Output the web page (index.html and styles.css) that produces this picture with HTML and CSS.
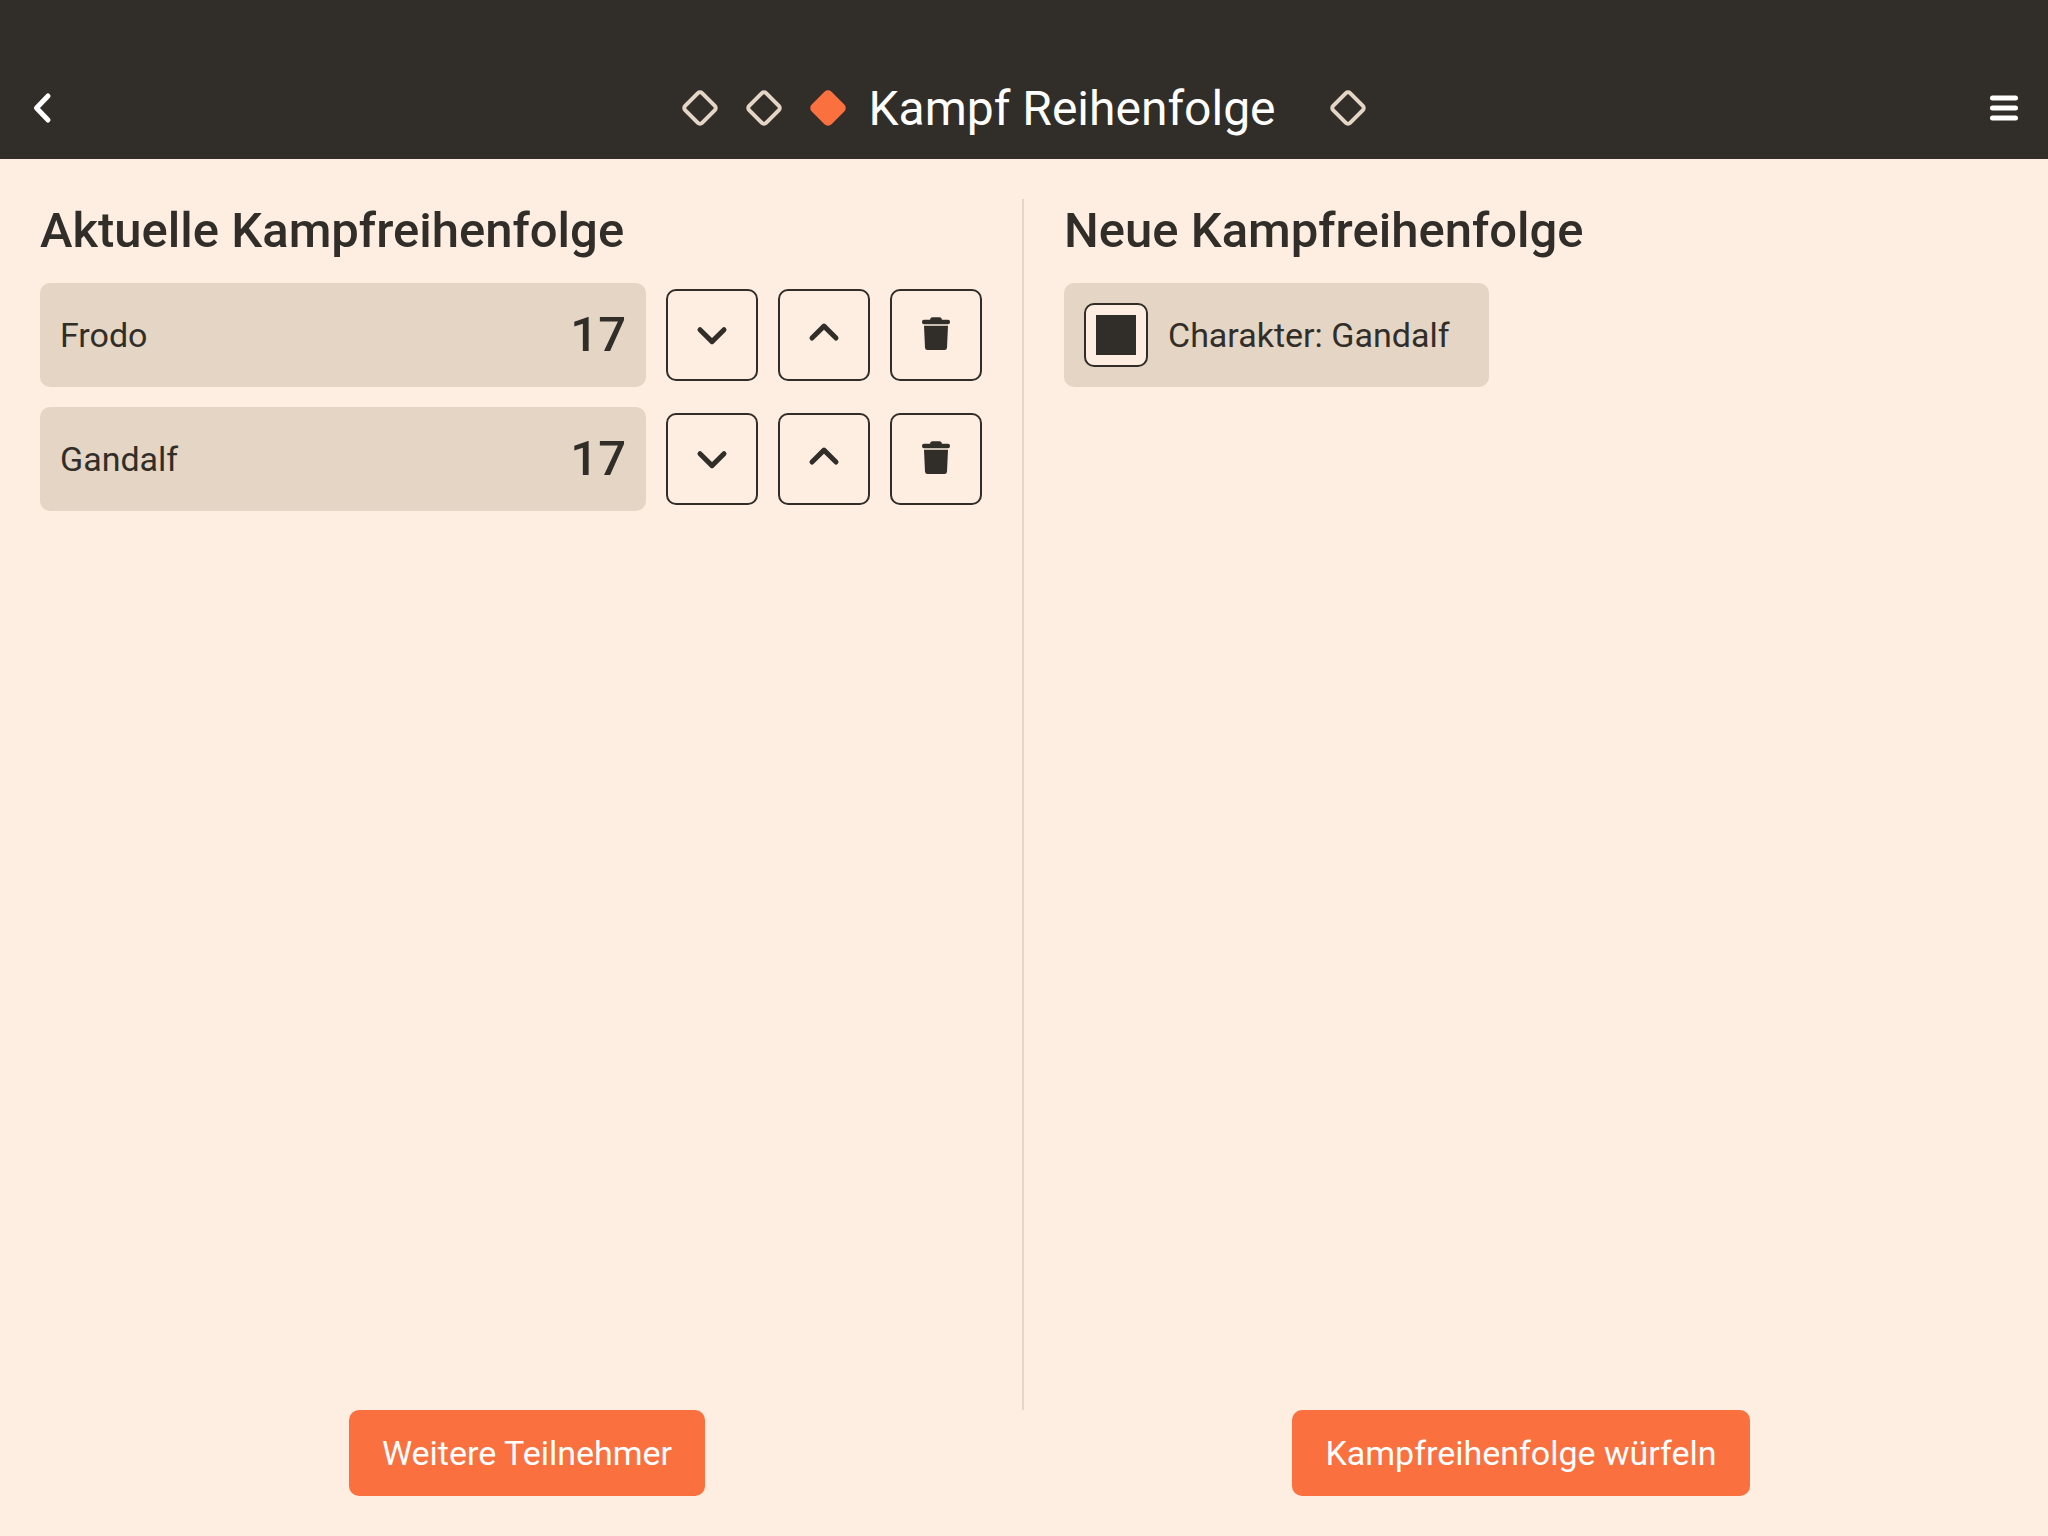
FILE: index.html
```html
<!DOCTYPE html>
<html lang="de">
<head>
<meta charset="utf-8">
<meta name="viewport" content="width=device-width, initial-scale=1">
<title>Kampf Reihenfolge</title>
<link rel="stylesheet" href="styles.css">
</head>
<body>
<svg class="sprite" aria-hidden="true">
  <symbol id="diamond" viewBox="0 0 40 40"><rect x="8" y="8" width="24" height="24" rx="3" transform="rotate(45 20 20)"/></symbol>
  <symbol id="down" viewBox="0 0 48 48"><path d="M12 18.7 24 30.6 36 18.7"/></symbol>
  <symbol id="up" viewBox="0 0 48 48"><path d="M12 27 24 15.1 36 27"/></symbol>
  <symbol id="trash" viewBox="0 0 48 48"><path d="M12 8.7h6c.6-1.6 1.200-2.400 2.500-2.400h7c1.300 0 1.900.8 2.500 2.400h6a2 2 0 0 1 2 2v.6a2 2 0 0 1-2 2H12a2 2 0 0 1-2-2v-.6a2 2 0 0 1 2-2zM12 14.700h24l-1 22a2.500 2.500 0 0 1-2.500 2.300h-17a2.500 2.500 0 0 1-2.500-2.300z"/></symbol>
</svg>
<header class="topbar">
  <button class="bar-button" type="button" aria-label="Zurück">
    <svg class="bar-icon" viewBox="0 0 48 48"><path d="M28 12 16.500 24 28 36"/></svg>
  </button>
  <nav class="steps" aria-label="Schritte">
    <a class="step" href="#" aria-label="Schritt 1"><svg class="diamond"><use href="#diamond"/></svg></a>
    <a class="step" href="#" aria-label="Schritt 2"><svg class="diamond"><use href="#diamond"/></svg></a>
    <a class="step step-active" href="#" aria-label="Schritt 3"><svg class="diamond"><use href="#diamond"/></svg></a>
    <h1 class="title">Kampf Reihenfolge</h1>
    <a class="step" href="#" aria-label="Schritt 4"><svg class="diamond"><use href="#diamond"/></svg></a>
  </nav>
  <button class="bar-button" type="button" aria-label="Menü">
    <svg class="bar-icon" viewBox="0 0 48 48"><path d="M12.500 14h23M12.500 24h23M12.500 34h23"/></svg>
  </button>
</header>
<main class="columns">
  <section class="column column-current">
    <h2 class="heading">Aktuelle Kampfreihenfolge</h2>
    <ul class="list">
      <li class="row">
        <div class="card entry"><span class="name">Frodo</span><span class="score">17</span></div>
        <button class="tool" type="button" aria-label="Frodo nach unten"><svg class="icon"><use href="#down"/></svg></button>
        <button class="tool" type="button" aria-label="Frodo nach oben"><svg class="icon"><use href="#up"/></svg></button>
        <button class="tool" type="button" aria-label="Frodo löschen"><svg class="icon icon-solid"><use href="#trash"/></svg></button>
      </li>
      <li class="row">
        <div class="card entry"><span class="name">Gandalf</span><span class="score">17</span></div>
        <button class="tool" type="button" aria-label="Gandalf nach unten"><svg class="icon"><use href="#down"/></svg></button>
        <button class="tool" type="button" aria-label="Gandalf nach oben"><svg class="icon"><use href="#up"/></svg></button>
        <button class="tool" type="button" aria-label="Gandalf löschen"><svg class="icon icon-solid"><use href="#trash"/></svg></button>
      </li>
    </ul>
  </section>
  <section class="column">
    <h2 class="heading">Neue Kampfreihenfolge</h2>
    <div class="card choice">
      <input class="check" type="checkbox" id="gandalf" checked>
      <label class="choice-label" for="gandalf">Charakter: Gandalf</label>
    </div>
  </section>
</main>
<footer class="actions">
  <button class="primary" type="button">Weitere Teilnehmer</button>
  <button class="primary" type="button">Kampfreihenfolge würfeln</button>
</footer>
</body>
</html>
```
FILE: styles.css
```css
:root {
  --ink: #312e29;
  --paper: #fdeee1;
  --sand: #e5d5c4;
  --accent: #fa703f;
}

* {
  box-sizing: border-box;
}

body {
  margin: 0;
  min-height: 100vh;
  display: flex;
  flex-direction: column;
  background: var(--paper);
  color: var(--ink);
  font-family: Roboto, "Liberation Sans", sans-serif;
  font-size: 34px;
  line-height: 48px;
}

button {
  font: inherit;
  cursor: pointer;
}

.sprite {
  position: absolute;
  width: 0;
  height: 0;
}

.topbar {
  display: flex;
  align-items: center;
  justify-content: space-between;
  padding: 57px 20px 0;
  min-height: 159px;
  background: var(--ink);
  color: #fff;
}

.bar-button {
  display: flex;
  padding: 0;
  border: 0;
  background: none;
  color: inherit;
}

.bar-icon {
  width: 48px;
  height: 48px;
  fill: none;
  stroke: currentColor;
  stroke-width: 5;
  stroke-linecap: round;
  stroke-linejoin: round;
}

.steps {
  display: flex;
  align-items: center;
}

.step {
  display: flex;
  justify-content: center;
  width: 64px;
  color: var(--sand);
}

.diamond {
  width: 40px;
  height: 40px;
  fill: none;
  stroke: currentColor;
  stroke-width: 4;
}

.step-active {
  color: var(--accent);
}

.step-active .diamond {
  fill: currentColor;
}

.title {
  margin: 0;
  padding: 2px 40px 0 8px;
  font-size: 48px;
  font-weight: 400;
  line-height: 64px;
}

.columns {
  flex: 1;
  display: grid;
  grid-template-columns: 1fr 1fr;
  padding-top: 40px;
}

.column {
  padding: 0 40px;
}

.column-current {
  border-right: 2px solid var(--sand);
}

.heading {
  margin: 0 0 20px;
  font-size: 49px;
  font-weight: 500;
  line-height: 64px;
}

.list {
  display: grid;
  gap: 20px;
  margin: 0;
  padding: 0;
  list-style: none;
}

.row {
  display: flex;
  align-items: center;
  gap: 20px;
}

.card {
  display: flex;
  align-items: center;
  min-height: 104px;
  padding: 20px;
  border-radius: 10px;
  background: var(--sand);
}

.entry {
  flex: 1;
  justify-content: space-between;
}

.score {
  font-size: 49px;
  font-weight: 500;
}

.tool {
  display: flex;
  align-items: center;
  justify-content: center;
  width: 92px;
  height: 92px;
  padding: 0;
  border: 2px solid var(--ink);
  border-radius: 10px;
  background: none;
  color: inherit;
}

.icon {
  width: 48px;
  height: 48px;
  fill: none;
  stroke: currentColor;
  stroke-width: 5;
  stroke-linecap: round;
  stroke-linejoin: round;
}

.icon-solid {
  fill: currentColor;
  stroke: none;
}

.choice {
  width: fit-content;
  gap: 20px;
}

.check {
  appearance: none;
  width: 64px;
  height: 64px;
  margin: 0;
  border: 2px solid var(--ink);
  border-radius: 10px;
  background-color: var(--paper);
}

.check:checked {
  background-image: linear-gradient(var(--ink), var(--ink));
  background-position: center;
  background-size: 40px 40px;
  background-repeat: no-repeat;
}

.choice-label {
  padding-right: 20px;
}

.actions {
  display: grid;
  grid-template-columns: 1fr 1fr;
  gap: 20px;
  padding: 0 40px 40px;
}

.primary {
  justify-self: center;
  min-height: 86px;
  padding: 0 33px;
  border: 0;
  border-radius: 10px;
  background: var(--accent);
  color: #fff;
}
```
